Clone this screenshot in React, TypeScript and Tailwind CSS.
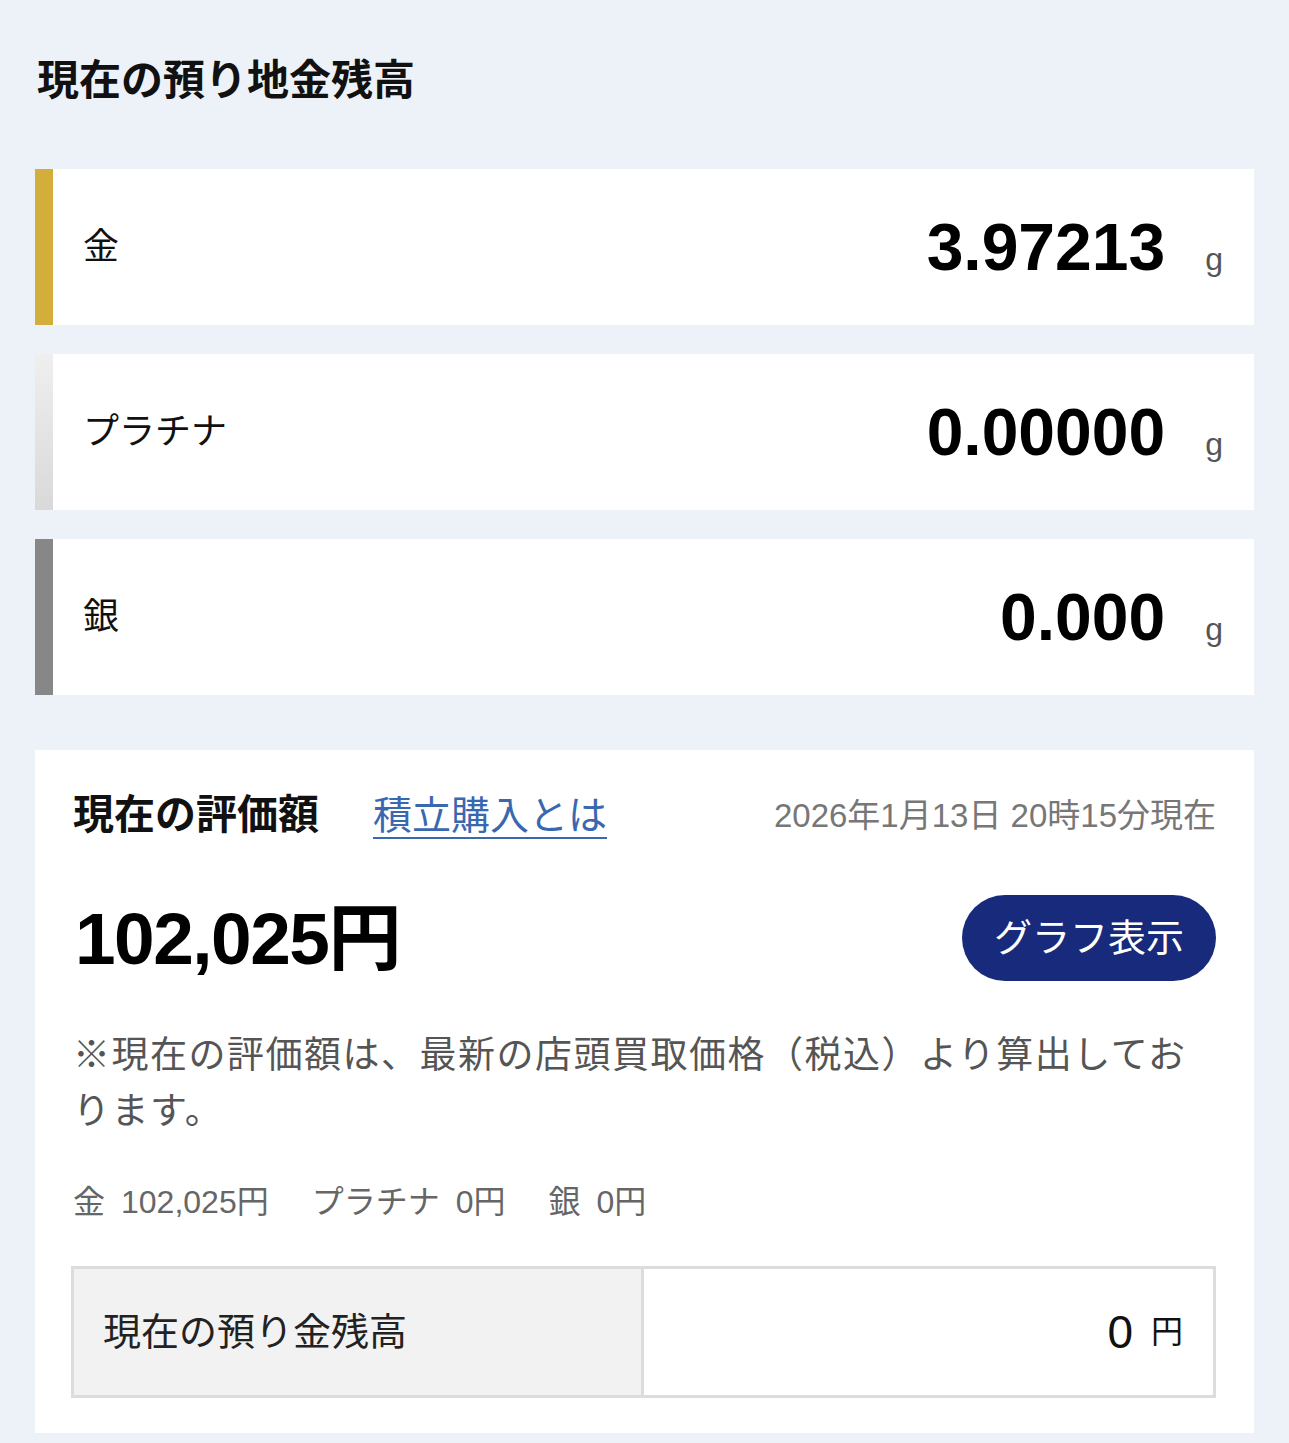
const font = "font-['Liberation_Sans','Noto_Sans_CJK_JP',sans-serif]";

type Metal = {
  label: string;
  value: string;
  bar: string;
};

const metals: Metal[] = [
  { label: '金', value: '3.97213', bar: 'bg-[#d3ae3b]' },
  { label: 'プラチナ', value: '0.00000', bar: 'bg-gradient-to-b from-[#efefef] to-[#d9d9d9]' },
  { label: '銀', value: '0.000', bar: 'bg-[#878787]' },
];

function MetalCard({ label, value, bar }: Metal) {
  return (
    <div className="flex h-[156px] bg-white">
      <div className={`w-[18px] shrink-0 ${bar}`} />
      <div className="flex flex-1 items-center justify-between pl-[30px] pr-[31px]">
        <p className="text-[36px] leading-none text-[#111]">{label}</p>
        <div className="flex items-baseline">
          <span className="text-[66px] font-bold leading-none text-black">{value}</span>
          <span className="ml-[40px] text-[32px] leading-none text-[#555]">g</span>
        </div>
      </div>
    </div>
  );
}

export default function App() {
  return (
    <div className={`min-h-[1443px] bg-[#edf2f9] px-[35px] pb-[10px] ${font}`}>
      <h1 className="flex h-[60px] translate-y-[51px] items-center pl-[2px] text-[42px] font-bold leading-none text-[#111]">
        現在の預り地金残高
      </h1>

      <div className="mt-[109px] flex flex-col gap-[29px]">
        {metals.map((m) => (
          <MetalCard key={m.label} {...m} />
        ))}
      </div>

      <section className="mt-[55px] bg-white px-[38px] pb-[35px] pt-[30px]">
        <div className="flex h-[70px] items-center justify-between">
          <div className="flex items-center gap-[54px]">
            <h2 className="text-[41px] font-bold leading-none text-[#111]">現在の評価額</h2>
            <a href="#" className="text-[39px] leading-none text-[#3a68b0] underline decoration-2 underline-offset-[8px]">
              積立購入とは
            </a>
          </div>
          <p className="text-[33px] leading-none text-[#777]">2026年1月13日 20時15分現在</p>
        </div>

        <div className="mt-[45px] flex h-[86px] items-center justify-between">
          <p className="pl-[2px] text-[73px] font-bold leading-none tracking-[-1.5px] text-black">102,025円</p>
          <button className="flex h-[86px] w-[254px] items-center justify-center rounded-full bg-[#172a7b] text-[38px] leading-none text-white">
            グラフ表示
          </button>
        </div>

        <p className="mt-[47px] text-[37px] leading-[56px] tracking-[1.5px] text-[#555]">
          ※現在の評価額は、最新の店頭買取価格（税込）より算出しております。
        </p>

        <p className="mt-[40px] flex gap-[43px] text-[32px] leading-[44px] text-[#666]">
          <span>
            金<span className="ml-[16px]">102,025円</span>
          </span>
          <span>
            プラチナ<span className="ml-[16px]">0円</span>
          </span>
          <span>
            銀<span className="ml-[16px]">0円</span>
          </span>
        </p>

        <div className="-ml-[2px] mt-[42px] grid h-[132px] grid-cols-2 border-[3px] border-[#dcdcdc]">
          <div className="flex items-center border-r-[3px] border-[#dcdcdc] bg-[#f2f2f2] pl-[29px]">
            <span className="text-[38px] leading-none text-[#222]">現在の預り金残高</span>
          </div>
          <div className="flex items-center justify-end pr-[30px]">
            <span className="text-[46px] leading-none text-[#111]">0</span>
            <span className="ml-[18px] text-[32px] leading-none text-[#111]">円</span>
          </div>
        </div>
      </section>
    </div>
  );
}
